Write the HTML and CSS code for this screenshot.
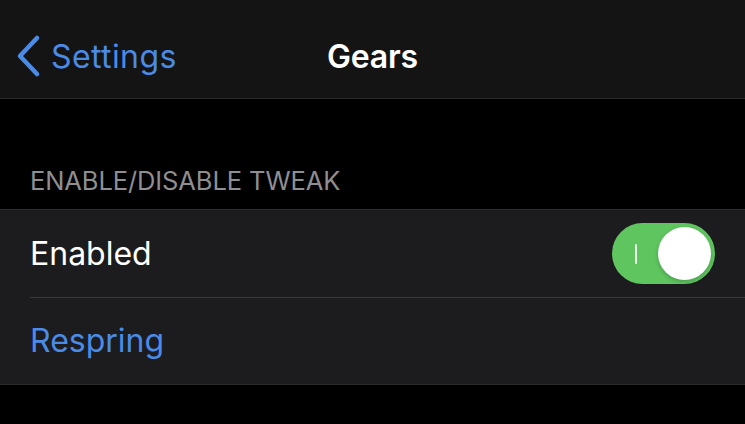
FILE: index.html
```html
<!DOCTYPE html>
<html lang="en">
<head>
  <meta charset="UTF-8">
  <title>Gears</title>
  <link rel="stylesheet" href="styles.css">
</head>
<body>
  <div class="navbar">
    <a class="back" href="#">
      <svg class="chevron" width="26" height="44" viewBox="0 0 26 44">
        <path d="M22 4 L5 22 L22 40" fill="none" stroke="#4a8be6" stroke-width="4.5" stroke-linecap="round" stroke-linejoin="round"/>
      </svg>
      <span>Settings</span>
    </a>
    <h1 class="title">Gears</h1>
    <div></div>
  </div>

  <div class="section-header">ENABLE/DISABLE TWEAK</div>

  <div class="group">
    <div class="row">
      <span class="label">Enabled</span>
      <div class="toggle on">
        <span class="toggle-mark"></span>
        <span class="knob"></span>
      </div>
    </div>
    <div class="row">
      <span class="label link">Respring</span>
    </div>
  </div>
</body>
</html>
```

FILE: styles.css
```css
body {
  margin: 0;
  background: #000;
  color: #fff;
  font-family: Inter, "Noto Sans", sans-serif;
}

.navbar {
  height: 99px;
  box-sizing: border-box;
  padding-top: 14px;
  background: #141414;
  border-bottom: 1px solid #2a2a2a;
  display: grid;
  grid-template-columns: 1fr auto 1fr;
  align-items: center;
}

.back {
  display: flex;
  align-items: center;
  gap: 10px;
  padding-left: 15px;
  color: #4a8be6;
  text-decoration: none;
  font-size: 32px;
  letter-spacing: 0.4px;
}

.title {
  margin: 0;
  font-size: 32px;
  font-weight: 600;
  letter-spacing: -0.2px;
}

.section-header {
  height: 110px;
  box-sizing: border-box;
  display: flex;
  align-items: flex-end;
  padding: 0 30px 13px;
  color: #8e8e93;
  font-size: 25.5px;
  letter-spacing: -0.1px;
}

.group {
  background: #1c1c1e;
  border-top: 1px solid #2c2c2e;
  border-bottom: 1px solid #2c2c2e;
}

.row {
  position: relative;
  height: 87px;
  display: flex;
  align-items: center;
  justify-content: space-between;
  padding: 0 30px;
}

.row + .row::before {
  content: "";
  position: absolute;
  top: 0;
  left: 30px;
  right: 0;
  border-top: 1px solid #3a3a3c;
}

.label {
  font-size: 32px;
  letter-spacing: 0;
}

.link {
  color: #4a8be6;
}

.toggle {
  width: 103px;
  height: 61px;
  box-sizing: border-box;
  border-radius: 31px;
  background: #5ec55f;
  display: flex;
  align-items: center;
  padding: 0 4px 0 23px;
}

.toggle-mark {
  width: 2px;
  height: 20px;
  background: #e8f7e8;
  border-radius: 1px;
}

.knob {
  margin-left: auto;
  width: 53px;
  height: 53px;
  border-radius: 50%;
  background: #fff;
  box-shadow: 0 2px 4px rgba(0, 0, 0, 0.2);
}
```
